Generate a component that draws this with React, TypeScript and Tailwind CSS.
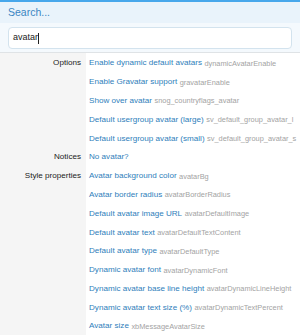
const groups: { label: string; items: [string, string][] }[] = [
  {
    label: 'Options',
    items: [
      ['Enable dynamic default avatars', 'dynamicAvatarEnable'],
      ['Enable Gravatar support', 'gravatarEnable'],
      ['Show over avatar', 'snog_countryflags_avatar'],
      ['Default usergroup avatar (large)', 'sv_default_group_avatar_l'],
      ['Default usergroup avatar (small)', 'sv_default_group_avatar_s'],
    ],
  },
  { label: 'Notices', items: [['No avatar?', '']] },
  {
    label: 'Style properties',
    items: [
      ['Avatar background color', 'avatarBg'],
      ['Avatar border radius', 'avatarBorderRadius'],
      ['Default avatar image URL', 'avatarDefaultImage'],
      ['Default avatar text', 'avatarDefaultTextContent'],
      ['Default avatar type', 'avatarDefaultType'],
      ['Dynamic avatar font', 'avatarDynamicFont'],
      ['Dynamic avatar base line height', 'avatarDynamicLineHeight'],
      ['Dynamic avatar text size (%)', 'avatarDynamicTextPercent'],
      ['Avatar size', 'xbMessageAvatarSize'],
    ],
  },
]

export default function App() {
  return (
    <div
      className="w-[300px] h-[335px] overflow-hidden bg-white border-t-2 border-[#47a7eb]"
      style={{ fontFamily: '"Liberation Sans", Arial, sans-serif' }}
    >
      <div className="h-[21px] bg-[#e9f3fb] px-2 flex items-center text-[10.5px] text-[#3a86c2]">
        Search...
      </div>
      <div className="bg-[#f4f9fd] px-2 pt-[4px] pb-[3px] border-b border-[#dfe3e6]">
        <div className="h-[22px] bg-white border border-[#d3e3ee] rounded-[4px] flex items-center px-[4px] text-[9px] text-[#222]">
          avatar<span className="w-px h-[11px] bg-[#222]" />
        </div>
      </div>
      <div className="flex">
        <div className="w-[86px] bg-[#f5f5f5] shrink-0 pt-px">
          {groups.map((g) => (
            <div key={g.label}>
              {g.items.map((_, i) => (
                <div key={i} className="h-[18.8px] flex items-center justify-end pr-[5px] text-[8.1px] text-[#222]">
                  {i === 0 ? g.label : ''}
                </div>
              ))}
            </div>
          ))}
        </div>
        <div className="flex-1 pl-[3px] pt-px whitespace-nowrap">
          {groups.map((g) =>
            g.items.map(([title, key]) => (
              <div key={title} className="h-[18.8px] flex items-center gap-[2.5px]">
                <span className="text-[8.1px] text-[#2f80bb]">{title}</span>
                {key && <span className="text-[7.4px] text-[#a3a3a3]">{key}</span>}
              </div>
            ))
          )}
        </div>
      </div>
    </div>
  )
}
